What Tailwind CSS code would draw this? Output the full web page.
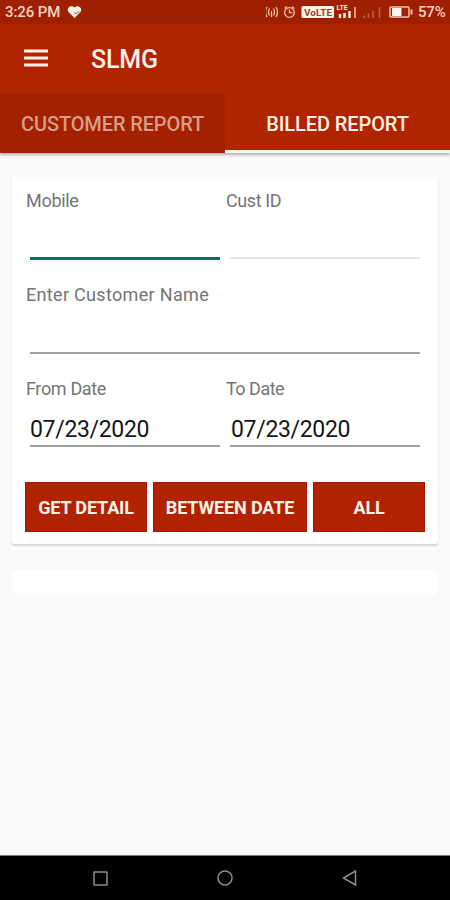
<!DOCTYPE html>
<html lang="en">
<head>
<meta charset="utf-8">
<title>SLMG</title>
<script src="https://cdn.jsdelivr.net/npm/@tailwindcss/browser@4"></script>
</head>
<body class="w-[450px] h-[900px] overflow-hidden bg-[#fafafa] font-[Roboto,sans-serif] flex flex-col">
  <header class="shrink-0 bg-[#b02400] shadow-[0_2px_3px_rgba(0,0,0,0.3)]">
    <div class="h-6 bg-[#9e2000] flex items-center pl-[5px] pr-[4px] text-[#f3d3c6] text-[15px] font-medium leading-6 whitespace-nowrap">
      <span class="w-[55px]  tracking-[-0.1px]">3:26 PM</span>
      <svg class="ml-[7px]" width="15" height="14" viewBox="0 0 15 14"><path d="M7.500 13 1.500 7C-1 4 3-1.200 7.500 2.500 12-1.200 16 4 13.500 7Z" fill="#fff0e6"/><path d="M7 7.500l2 1.500 1.500-2h2" fill="none" stroke="#9e2000" stroke-width=".7"/></svg>
      <svg class="ml-auto" width="147" height="20" viewBox="266 2 147 20" fill="none" stroke="#edc0ad" stroke-width="1.300">
        <path d="M267 7q-3 5 0 10M269.500 8.500q-2 3.500 0 7M276 7q3 5 0 10M273.500 8.500q2 3.500 0 7M271.500 11v6"/>
        <circle cx="289.500" cy="12.500" r="4.800"/><path d="M289.500 9.500v3.200h3M284.500 8.500l2.500-2M294.500 8.500l-2.500-2"/>
        <rect x="301.500" y="6" width="32.500" height="12" rx="1.500" fill="#fff2e9" stroke="none"/>
        <text x="304" y="15.500" textLength="28" lengthAdjust="spacingAndGlyphs" font-size="9.500" font-weight="700" fill="#9e4430" stroke="none">VoLTE</text>
        <text x="336.500" y="10" textLength="11" lengthAdjust="spacingAndGlyphs" font-size="7.500" font-weight="700" fill="#ffe9dc" stroke="none">LTE</text>
        <path d="M340 14v4M344.500 13v5M349.500 11v7" stroke="#ffe9dc" stroke-width="2.500"/><path d="M355 7v11" stroke-width="1.500"/>
        <path d="M364 15.500v2.500M368.500 13.500v4.500M373 11v7M379.500 7v11" stroke="#c75c40" stroke-width="1.600"/>
        <rect x="390" y="7" width="19" height="10" rx="1" stroke-width="1.500"/><rect x="392" y="8" width="9.500" height="8" fill="#fff2e9" stroke="none"/><path d="M411.500 9.500v5" stroke-width="2"/>
      </svg>
      <span class="ml-[5px] w-[28px] tracking-[-0.2px]">57%</span>
    </div>
    <div class="h-[69px] flex items-center pl-6 text-[#fff0e6]">
      <svg class="-mt-px" width="24" height="18" viewBox="0 0 24 18"><path d="M0 2h24M0 9h24M0 16h24" stroke="currentColor" stroke-width="3"/></svg>
      <h1 class="ml-[43px] mt-[3px] text-[25px] font-medium leading-8 tracking-[-0.2px]">SLMG</h1>
    </div>
    <nav class="h-[60px] flex text-[20px] font-medium leading-[62px] text-center whitespace-nowrap">
      <div class="w-[225px] bg-[#a32000] text-[#d79d89]"><span class="tracking-[-0.12px]">CUSTOMER REPORT</span></div>
      <div class="w-[225px] text-[#fff0e6] border-b-[3px] border-[#fff4ee]"><span class="tracking-[-0.1px]">BILLED REPORT</span></div>
    </nav>
  </header>
  <main class="flex-1 px-3 pt-6 text-[#757575]">
    <section class="w-[426px] h-[367px] rounded-[3px] bg-white shadow-[0_2px_2px_rgba(0,0,0,0.14)] px-[13px] pt-[13px] text-[18px] leading-[22px]">
      <div class="grid grid-cols-2 h-[94px]">
        <div><label class="ml-px tracking-[-0.3px]">Mobile</label><div class="mx-[5px] h-[48px] border-b-[3px] border-[#16695c]"></div></div>
        <div><label class="ml-px tracking-[-0.4px]">Cust ID</label><div class="mx-[5px] h-[47px] border-b-2 border-[#e5e5e5]"></div></div>
      </div>
      <div class="h-[94px]"><label class="ml-px tracking-[0.32px]">Enter Customer Name</label><div class="mx-[5px] h-[48px] border-b-2 border-[#a0a0a0]"></div></div>
      <div class="grid grid-cols-2 h-[104px]">
        <div><label class="ml-px tracking-[-0.35px]">From Date</label><div class="mx-[5px] h-[47px] border-b-2 border-[#a0a0a0] pt-[16px] text-[23px] leading-7 tracking-[-0.32px] text-[#161616]">07/23/2020</div></div>
        <div><label class="ml-px tracking-[-0.5px]">To Date</label><div class="mx-[5px] h-[47px] border-b-2 border-[#a0a0a0] pt-[16px] text-[23px] leading-7 tracking-[-0.32px] text-[#161616]"><span class="ml-px">07/23/2020</span></div></div>
      </div>
      <div class="flex gap-[6px] h-[50px] text-[18px] font-bold text-[#fff0e6] text-center whitespace-nowrap tracking-[-0.14px]">
        <button class="w-[122px] bg-[#b02200] border border-[#a01800] leading-[50px]">GET DETAIL</button>
        <button class="w-[154px] bg-[#b02200] border border-[#a01800] leading-[50px]">BETWEEN DATE</button>
        <button class="w-[112px] bg-[#b02200] border border-[#a01800] leading-[50px]">ALL</button>
      </div>
    </section>
    <section class="mt-[26px] w-[426px] h-[25px] rounded-[5px] bg-white"></section>
  </main>
  <footer class="h-[45px] shrink-0 bg-black border-t border-[#777] flex items-center justify-between pl-[93px] pr-[93px]">
    <svg width="15" height="15" viewBox="0 0 15 15" fill="none" stroke="#8d8d8d" stroke-width="1.500"><rect x="1" y="1" width="13" height="13" rx=".5"/></svg>
    <svg width="16" height="16" viewBox="0 0 16 16" fill="none" stroke="#8d8d8d" stroke-width="1.500"><circle cx="8" cy="8" r="7"/></svg>
    <svg width="15" height="16" viewBox="0 0 15 16" fill="none" stroke="#8d8d8d" stroke-width="1.500"><path d="M13.500 1v14L1.500 8Z"/></svg>
  </footer>
</body>
</html>
